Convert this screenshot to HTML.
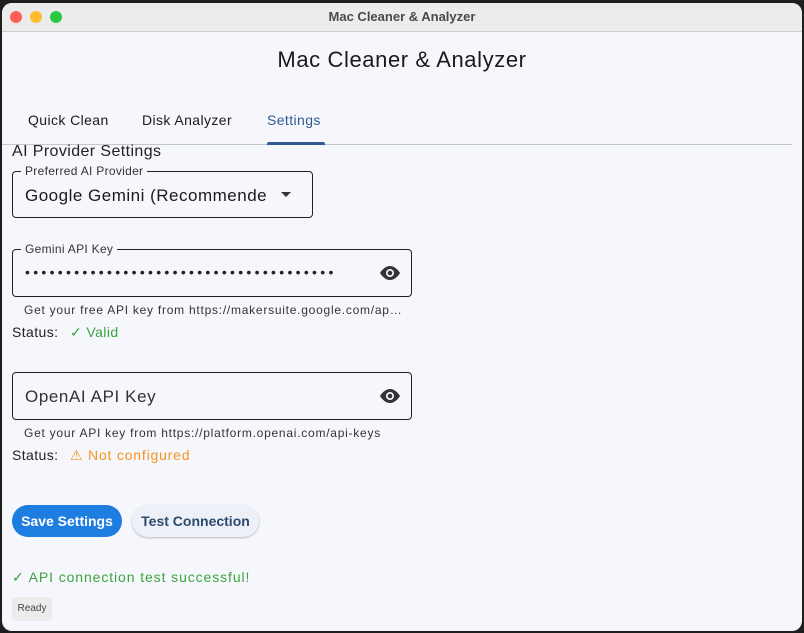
<!DOCTYPE html>
<html><head><meta charset="utf-8"><style>
*{margin:0;padding:0;box-sizing:border-box}
body{width:804px;height:633px;background:#1e1e1e;font-family:"Liberation Sans",sans-serif;position:relative;overflow:hidden}
.win{position:absolute;left:2px;top:3px;width:800px;height:628px;background:#f6f7fd;border-radius:10px;overflow:hidden}
.tb{position:absolute;left:0;top:0;width:800px;height:29px;background:#ececec;border-bottom:1px solid #cfcfcf;text-align:center;font-size:13px;font-weight:bold;color:#4a4a4a;line-height:28px}
.dot{position:absolute;top:8px;width:12px;height:12px;border-radius:50%}
.a{position:absolute;white-space:nowrap;letter-spacing:0.4px}
.box{position:absolute;border:1px solid #222;border-radius:4px}
.lbl{position:absolute;top:-8px;left:8px;background:#f6f7fd;padding:0 4px;font-size:12px;color:#333;line-height:14px;letter-spacing:0.3px}
.eye{position:absolute;right:9px;top:14px}
</style></head><body>
<div class="win">
<div class="tb">Mac Cleaner &amp; Analyzer
<div class="dot" style="left:8px;background:#fe5f57"></div>
<div class="dot" style="left:28px;background:#febc2e"></div>
<div class="dot" style="left:48px;background:#28c840"></div></div>
<div class="a" style="left:0;width:800px;text-align:center;top:44px;font-size:22px;letter-spacing:0.6px;color:#1a1a1a">Mac Cleaner &amp; Analyzer</div>
<div class="a" style="left:26px;top:109px;font-size:14px;color:#1a1a1a;font-weight:500">Quick Clean</div>
<div class="a" style="left:140px;top:109px;font-size:14px;color:#1a1a1a">Disk Analyzer</div>
<div class="a" style="left:265px;top:109px;font-size:14px;color:#2f5a8e">Settings</div>
<div class="a" style="left:0;top:141px;width:790px;height:1px;background:#c3c6cc"></div>
<div class="a" style="left:265px;top:139px;width:58px;height:3px;background:#2f5a8e;border-radius:2px 2px 0 0"></div>
<div class="a" style="left:10px;top:139px;font-size:16px;color:#222;line-height:20px">AI Provider Settings</div>
<div class="box" style="left:10px;top:168px;width:301px;height:47px"><div class="lbl">Preferred AI Provider</div>
<div class="a" style="left:12px;top:14px;font-size:17px;color:#1a1a1a;letter-spacing:0.5px">Google Gemini (Recommende</div>
<div class="a" style="left:268px;top:20px;width:0;height:0;border-left:5px solid transparent;border-right:5px solid transparent;border-top:5px solid #333"></div></div>
<div class="box" style="left:10px;top:246px;width:400px;height:48px"><div class="lbl">Gemini API Key</div>
<div class="a" style="left:12px;top:14px;font-size:14px;color:#222;letter-spacing:3.3px">••••••••••••••••••••••••••••••••••••••</div>
<svg class="eye" width="24" height="18" viewBox="0 0 24 16"><path d="M12 1C6 1 2 8 2 8s4 7 10 7 10-7 10-7-4-7-10-7z" fill="#333"/><circle cx="12" cy="8" r="4" fill="#f6f7fd"/><circle cx="12" cy="8" r="2.3" fill="#333"/></svg></div>
<div class="a" style="left:22px;top:300px;font-size:12px;color:#333;letter-spacing:0.75px">Get your free API key from https://makersuite.google.com/ap…</div>
<div class="a" style="left:10px;top:321px;font-size:14px;color:#222">Status:</div>
<div class="a" style="left:68px;top:321px;font-size:14px;color:#3ba53b">✓ Valid</div>
<div class="box" style="left:10px;top:369px;width:400px;height:48px">
<div class="a" style="left:12px;top:14px;font-size:17px;color:#333;letter-spacing:0.6px">OpenAI API Key</div>
<svg class="eye" width="24" height="18" viewBox="0 0 24 16"><path d="M12 1C6 1 2 8 2 8s4 7 10 7 10-7 10-7-4-7-10-7z" fill="#333"/><circle cx="12" cy="8" r="4" fill="#f6f7fd"/><circle cx="12" cy="8" r="2.3" fill="#333"/></svg></div>
<div class="a" style="left:22px;top:423px;font-size:12px;color:#333;letter-spacing:0.75px">Get your API key from https://platform.openai.com/api-keys</div>
<div class="a" style="left:10px;top:444px;font-size:14px;color:#222">Status:</div>
<div class="a" style="left:68px;top:444px;font-size:14px;color:#f7931e;letter-spacing:0.8px">⚠ Not configured</div>
<div class="a" style="left:10px;top:502px;width:110px;height:32px;border-radius:16px;background:#1e7de0;color:#fff;font-weight:bold;font-size:14px;text-align:center;line-height:32px;letter-spacing:0">Save Settings</div>
<div class="a" style="left:130px;top:502px;width:127px;height:32px;border-radius:16px;background:#eef0f7;box-shadow:0 1px 2px rgba(0,0,0,.25);color:#2c4a70;font-weight:bold;font-size:14px;text-align:center;line-height:32px;letter-spacing:0">Test Connection</div>
<div class="a" style="left:10px;top:566px;font-size:14px;color:#3ba53b;letter-spacing:0.9px">✓ API connection test successful!</div>
<div class="a" style="left:10px;top:594px;width:40px;height:24px;background:#ececec;border-radius:3px;font-size:10px;color:#444;text-align:center;line-height:24px;letter-spacing:0">Ready</div>
</div>
</body></html>
